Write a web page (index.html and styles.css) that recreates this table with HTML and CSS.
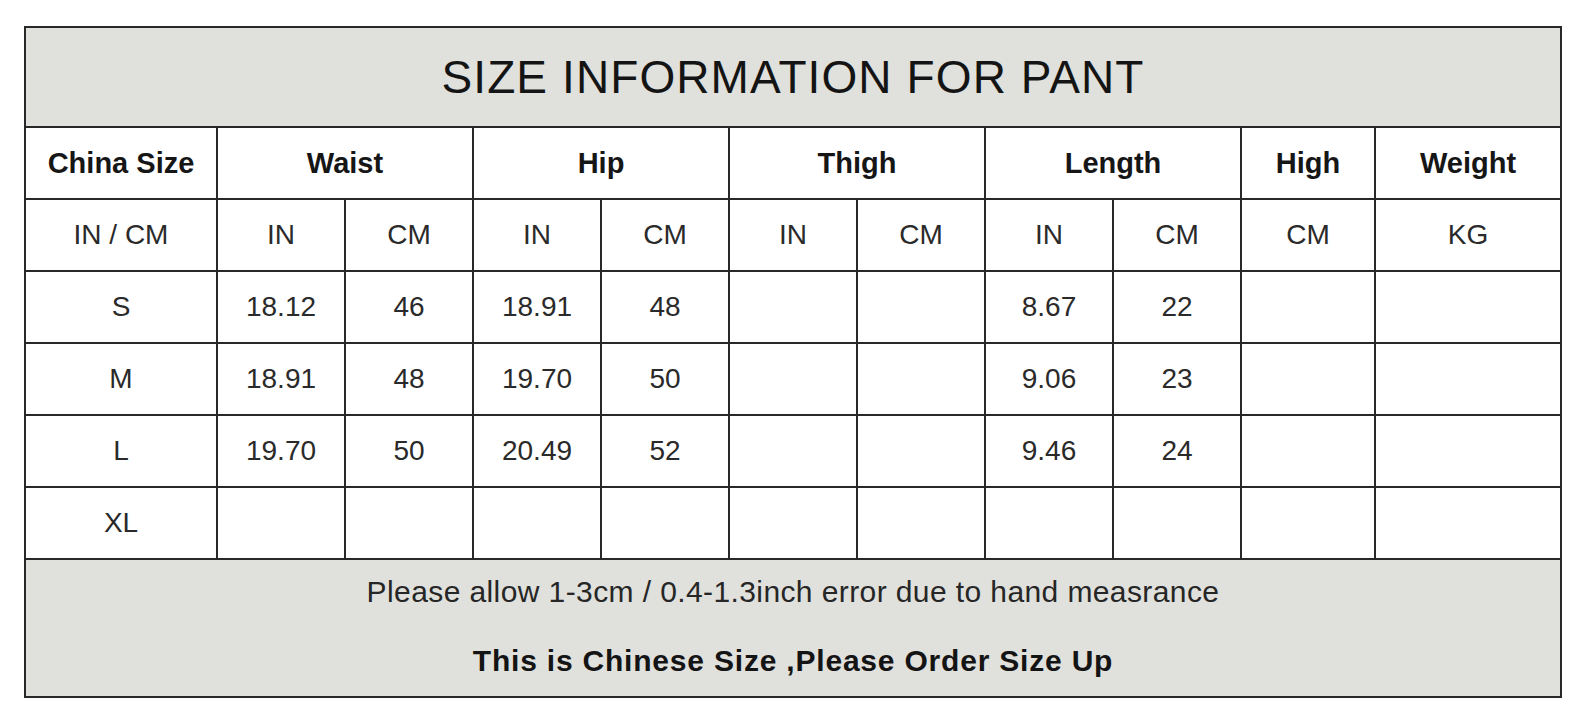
FILE: index.html
```html
<!DOCTYPE html>
<html>
<head>
<meta charset="utf-8">
<link rel="stylesheet" href="styles.css">
</head>
<body>
<div class="sheet">
  <div class="cell title span-all">SIZE INFORMATION FOR PANT</div>

  <div class="cell head">China Size</div>
  <div class="cell head span2">Waist</div>
  <div class="cell head span2">Hip</div>
  <div class="cell head span2">Thigh</div>
  <div class="cell head span2">Length</div>
  <div class="cell head">High</div>
  <div class="cell head">Weight</div>

  <div class="cell">IN / CM</div>
  <div class="cell">IN</div><div class="cell">CM</div>
  <div class="cell">IN</div><div class="cell">CM</div>
  <div class="cell">IN</div><div class="cell">CM</div>
  <div class="cell">IN</div><div class="cell">CM</div>
  <div class="cell">CM</div>
  <div class="cell">KG</div>

  <div class="cell">S</div>
  <div class="cell">18.12</div><div class="cell">46</div>
  <div class="cell">18.91</div><div class="cell">48</div>
  <div class="cell"></div><div class="cell"></div>
  <div class="cell">8.67</div><div class="cell">22</div>
  <div class="cell"></div>
  <div class="cell"></div>

  <div class="cell">M</div>
  <div class="cell">18.91</div><div class="cell">48</div>
  <div class="cell">19.70</div><div class="cell">50</div>
  <div class="cell"></div><div class="cell"></div>
  <div class="cell">9.06</div><div class="cell">23</div>
  <div class="cell"></div>
  <div class="cell"></div>

  <div class="cell">L</div>
  <div class="cell">19.70</div><div class="cell">50</div>
  <div class="cell">20.49</div><div class="cell">52</div>
  <div class="cell"></div><div class="cell"></div>
  <div class="cell">9.46</div><div class="cell">24</div>
  <div class="cell"></div>
  <div class="cell"></div>

  <div class="cell">XL</div>
  <div class="cell"></div><div class="cell"></div>
  <div class="cell"></div><div class="cell"></div>
  <div class="cell"></div><div class="cell"></div>
  <div class="cell"></div><div class="cell"></div>
  <div class="cell"></div>
  <div class="cell"></div>

  <div class="cell note span-all no-bottom">Please allow 1-3cm / 0.4-1.3inch error due to hand measrance</div>
  <div class="cell note strong span-all">This is Chinese Size ,Please Order Size Up</div>
</div>
</body>
</html>
```

FILE: styles.css
```css
html, body {
  margin: 0;
  padding: 0;
  background: #ffffff;
}

body {
  font-family: "Liberation Sans", Arial, sans-serif;
  color: #2a2a2a;
}

.sheet {
  display: grid;
  grid-template-columns: 192px repeat(8, 128px) 134px 186px;
  grid-template-rows: 100px repeat(6, 72px) 69px 69px;
  width: max-content;
  margin: 26px 0 0 24px;
  border-left: 2px solid #282828;
  border-top: 2px solid #282828;
}

.cell {
  box-sizing: border-box;
  display: flex;
  align-items: center;
  justify-content: center;
  border-right: 2px solid #282828;
  border-bottom: 2px solid #282828;
  font-size: 28px;
  line-height: 1;
  white-space: nowrap;
  background: #ffffff;
}

.span2 {
  grid-column: span 2;
}

.span-all {
  grid-column: 1 / -1;
}

.title {
  background: #e0e0dc;
  color: #141414;
  font-size: 46px;
  letter-spacing: 1.1px;
}

.head {
  font-weight: bold;
  font-size: 29px;
  color: #161616;
}

.note {
  background: #e0e0dc;
  font-size: 30px;
  letter-spacing: 0.4px;
  color: #262626;
  padding-bottom: 5px;
}

.note.strong {
  font-weight: bold;
  letter-spacing: 0.8px;
  color: #141414;
  padding-bottom: 4px;
}

.no-bottom {
  border-bottom: none;
}
```
